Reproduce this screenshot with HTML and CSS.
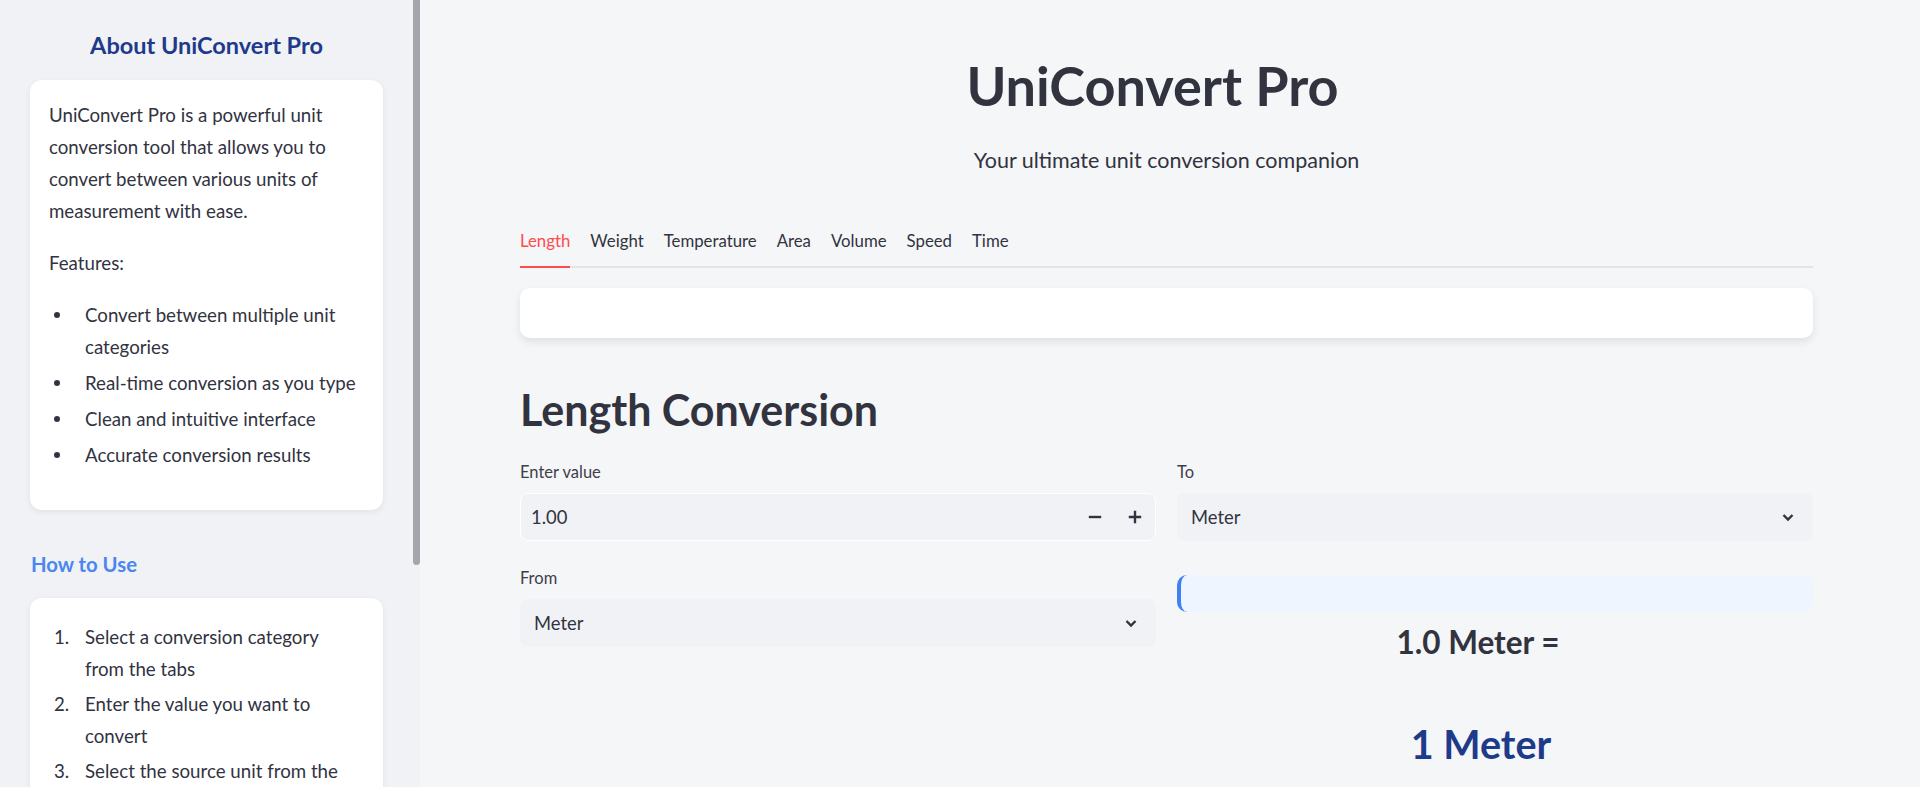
FILE: index.html
```html
<!DOCTYPE html>
<html lang="en">
<head>
<meta charset="utf-8">
<title>UniConvert Pro</title>
<link rel="stylesheet" href="styles.css">
</head>
<body>
<div class="app">
  <aside class="sidebar">
    <div class="side-content">
      <h2 class="side-title">About UniConvert Pro</h2>
      <div class="side-card">
        <p>UniConvert Pro is a powerful unit conversion tool that allows you to convert between various units of measurement with ease.</p>
        <p>Features:</p>
        <ul class="bullets">
          <li>Convert between multiple unit categories</li>
          <li>Real-time conversion as you type</li>
          <li>Clean and intuitive interface</li>
          <li>Accurate conversion results</li>
        </ul>
      </div>
      <h3 class="side-sub">How to Use</h3>
      <div class="side-card side-card-steps">
        <ol class="steps">
          <li>Select a conversion category from the tabs</li>
          <li>Enter the value you want to convert</li>
          <li>Select the source unit from the dropdown</li>
          <li>Select the target unit from the dropdown</li>
          <li>View the result instantly</li>
        </ol>
      </div>
    </div>
    <div class="side-scroll"><div class="side-thumb"></div></div>
  </aside>

  <main class="main">
    <header class="hero">
      <h1 class="hero-title">UniConvert Pro</h1>
      <p class="hero-sub">Your ultimate unit conversion companion</p>
    </header>

    <nav class="tabs">
      <span class="tab tab-active">Length</span>
      <span class="tab">Weight</span>
      <span class="tab">Temperature</span>
      <span class="tab">Area</span>
      <span class="tab">Volume</span>
      <span class="tab">Speed</span>
      <span class="tab">Time</span>
    </nav>

    <div class="tab-card"></div>

    <h2 class="section-title">Length Conversion</h2>

    <div class="cols">
      <div class="col">
        <div class="field">
          <label class="field-label">Enter value</label>
          <div class="num-input">
            <span class="num-value">1.00</span>
            <span class="step-btn">
              <svg width="14" height="14" viewBox="0 0 14 14"><path d="M2 7h10" stroke="#31333f" stroke-width="2.4" stroke-linecap="square"/></svg>
            </span>
            <span class="step-btn">
              <svg width="14" height="14" viewBox="0 0 14 14"><path d="M2 7h10M7 2v10" stroke="#31333f" stroke-width="2.4" stroke-linecap="square"/></svg>
            </span>
          </div>
        </div>
        <div class="field field-gap">
          <label class="field-label">From</label>
          <div class="select">
            <span class="select-value">Meter</span>
            <svg class="chev" width="14" height="14" viewBox="0 0 14 14"><path d="M2.5 5l4.5 4.5L11.5 5" fill="none" stroke="#31333f" stroke-width="2.4"/></svg>
          </div>
        </div>
      </div>

      <div class="col">
        <div class="field">
          <label class="field-label">To</label>
          <div class="select">
            <span class="select-value">Meter</span>
            <svg class="chev" width="14" height="14" viewBox="0 0 14 14"><path d="M2.5 5l4.5 4.5L11.5 5" fill="none" stroke="#31333f" stroke-width="2.4"/></svg>
          </div>
        </div>
        <div class="info-box"></div>
        <h3 class="result-from">1.0 Meter =</h3>
        <h2 class="result-to">1 Meter</h2>
      </div>
    </div>
  </main>
</div>
</body>
</html>
```

FILE: styles.css
```css
* { box-sizing: border-box; }

html, body {
  margin: 0;
  padding: 0;
  height: 100%;
}

body {
  font-family: "Lato", "Noto Sans", sans-serif;
  color: #31333f;
  background: #f5f6f8;
  overflow: hidden;
}

.app {
  display: flex;
  height: 100vh;
  overflow: hidden;
}

/* ---------- Sidebar ---------- */
.sidebar {
  width: 420px;
  flex-shrink: 0;
  display: flex;
  background: #f0f2f6;
  height: 100vh;
  overflow: hidden;
}

.side-content {
  width: 413px;
  padding: 30px 30px 0 30px;
}

.side-scroll {
  width: 7px;
  flex-shrink: 0;
}

.side-thumb {
  height: 565px;
  background: #a5a6ad;
  border-radius: 0 0 4px 4px;
}

.side-title {
  margin: 0 0 20px;
  font-size: 23.5px;
  line-height: 30px;
  font-weight: 700;
  color: #1e3a8a;
  text-align: center;
}

.side-card {
  background: #ffffff;
  border-radius: 12px;
  box-shadow: 0 2px 6px rgba(0, 0, 0, 0.07);
  padding: 19px 24px 23px 19px;
  font-size: 18.7px;
  line-height: 32px;
}

.side-card p {
  margin: 0 0 20px;
}

.bullets {
  list-style: none;
  margin: 0 0 16px;
  padding: 0;
}

.bullets li {
  display: flex;
}

.bullets li + li {
  margin-top: 4px;
}

.bullets li::before {
  content: "";
  flex-shrink: 0;
  width: 6px;
  height: 6px;
  border-radius: 50%;
  background: #31333f;
  margin: 13px 25px 0 5px;
}

.side-sub {
  margin: 42px 0 21px 1px;
  font-size: 20.3px;
  line-height: 25px;
  font-weight: 700;
  color: #4a86f0;
}

.side-card-steps {
  padding-top: 23px;
}

.steps {
  list-style: none;
  margin: 0;
  padding: 0;
  counter-reset: step;
}

.steps li {
  display: flex;
  counter-increment: step;
}

.steps li + li {
  margin-top: 3px;
}

.steps li::before {
  content: counter(step) ".";
  flex-shrink: 0;
  width: 31px;
  margin-left: 5px;
}

/* ---------- Main ---------- */
.main {
  flex: 1;
  padding: 51px 107px 0 100px;
  min-width: 0;
}

.hero {
  text-align: center;
}

.hero-title {
  margin: 0;
  padding-right: 28px;
  font-size: 54px;
  line-height: 70px;
  font-weight: 700;
  color: #31333f;
}

.hero-sub {
  margin: 26px 0 0;
  font-size: 21.5px;
  line-height: 26px;
}

.tabs {
  display: flex;
  gap: 20px;
  margin-top: 58px;
  box-shadow: inset 0 -2px 0 #e3e4e8;
}

.tab {
  font-size: 16.8px;
  line-height: 20px;
  padding-bottom: 15px;
  border-bottom: 2px solid transparent;
}

.tab-active {
  color: #ff4b4b;
  border-bottom-color: #ff4b4b;
}

.tab-card {
  margin-top: 20px;
  height: 50px;
  background: #ffffff;
  border-radius: 10px;
  box-shadow: 0 4px 9px rgba(0, 0, 0, 0.09);
}

.section-title {
  margin: 47px 0 0;
  font-size: 43px;
  line-height: 50px;
  font-weight: 700;
}

.cols {
  display: grid;
  grid-template-columns: 1fr 1fr;
  column-gap: 21px;
  margin-top: 27px;
}

.col {
  display: flex;
  flex-direction: column;
  min-width: 0;
}

.field {
  display: flex;
  flex-direction: column;
}

.field-gap {
  margin-top: 27px;
}

.field-label {
  font-size: 16.5px;
  line-height: 21px;
  margin-bottom: 10px;
  color: #3d3f4a;
}

.num-input {
  display: flex;
  align-items: center;
  height: 48px;
  background: #f0f2f6;
  border: 1px solid #ffffff;
  border-radius: 8px;
  padding-left: 10px;
}

.num-value {
  flex: 1;
  font-size: 18.4px;
}

.step-btn {
  width: 40px;
  height: 100%;
  display: flex;
  align-items: center;
  justify-content: center;
}

.select {
  display: flex;
  align-items: center;
  justify-content: space-between;
  height: 48px;
  background: #f0f2f6;
  border-radius: 8px;
  padding: 0 18px 0 14px;
}

.select-value {
  font-size: 18.4px;
}

.info-box {
  margin-top: 34px;
  height: 37px;
  background: #eef5fe;
  border-left: 4px solid #3b82f6;
  border-radius: 10px;
}

.result-from {
  margin: 12px 0 0;
  padding-right: 34px;
  text-align: center;
  font-size: 31.5px;
  line-height: 36px;
  font-weight: 700;
}

.result-to {
  margin: 60px 0 0;
  padding-right: 28px;
  text-align: center;
  font-size: 39.5px;
  line-height: 47px;
  font-weight: 700;
  color: #1e3a8a;
}
```
